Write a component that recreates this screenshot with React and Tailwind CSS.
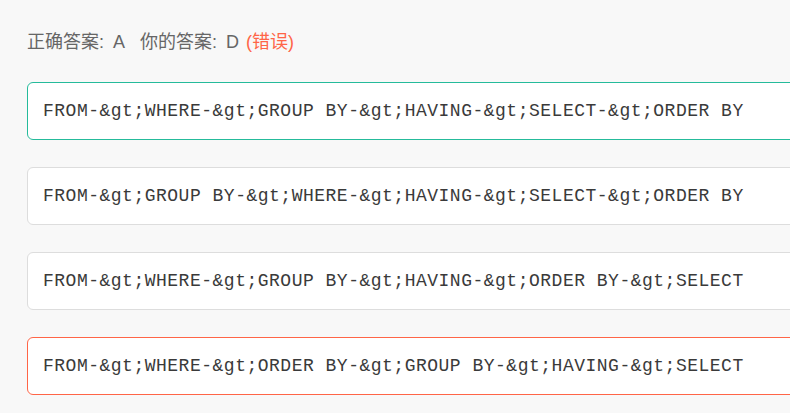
const options = [
  { text: 'FROM-&gt;WHERE-&gt;GROUP BY-&gt;HAVING-&gt;SELECT-&gt;ORDER BY', state: 'right' },
  { text: 'FROM-&gt;GROUP BY-&gt;WHERE-&gt;HAVING-&gt;SELECT-&gt;ORDER BY', state: 'none' },
  { text: 'FROM-&gt;WHERE-&gt;GROUP BY-&gt;HAVING-&gt;ORDER BY-&gt;SELECT', state: 'none' },
  { text: 'FROM-&gt;WHERE-&gt;ORDER BY-&gt;GROUP BY-&gt;HAVING-&gt;SELECT', state: 'wrong' },
]

const borderRenk = {
  right: 'border-[#25bb9b]',
  wrong: 'border-[#ff6547]',
  none: 'border-[#dddddd]',
}

function Secenek({ text, state }) {
  return (
    <div
      className={`h-[58px] w-[800px] flex items-center pl-[15px] bg-white border rounded-[6px] ${borderRenk[state]}`}
    >
      <span
        className="text-[18px] tracking-[0.5px] text-[#3a3a3a] whitespace-pre"
        style={{ fontFamily: '"Liberation Mono", "Courier New", monospace' }}
      >
        {text}
      </span>
    </div>
  )
}

export default function App() {
  return (
    <div
      className="min-h-screen w-[790px] h-[413px] overflow-hidden bg-[#f8f8f8] pl-[27px] pt-[29px]"
      style={{ fontFamily: '"Liberation Sans", "Noto Sans CJK SC", sans-serif' }}
    >
      <div className="text-[18px] leading-[26px] text-[#666] flex">
        <span>正确答案:</span>
        <span className="ml-[9px]">A</span>
        <span className="ml-[15px]">你的答案:</span>
        <span className="ml-[9px]">D</span>
        <span className="ml-[7px] text-[#ff6547]">(错误)</span>
      </div>
      <div className="mt-[27px] flex flex-col gap-[27px]">
        {options.map((o, i) => (
          <Secenek key={i} text={o.text} state={o.state} />
        ))}
      </div>
    </div>
  )
}
